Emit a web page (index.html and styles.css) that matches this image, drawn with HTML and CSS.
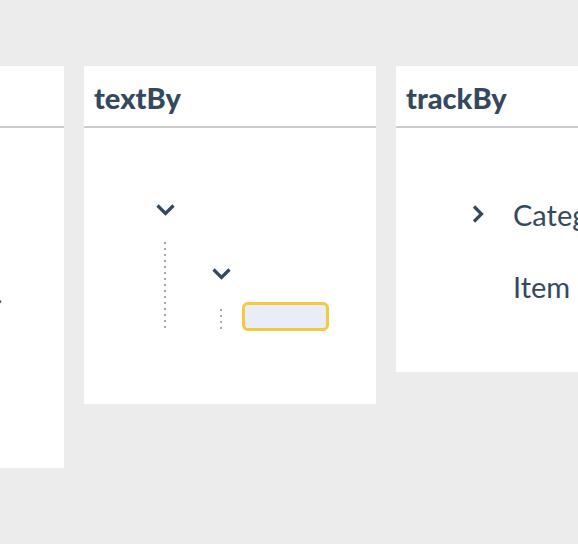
FILE: index.html
```html
<!DOCTYPE html>
<html lang="en">
<head>
<meta charset="utf-8">
<title>Tree demos</title>
<link rel="stylesheet" href="styles.css">
</head>
<body>
<div class="strip">
  <section class="card card-a">
    <header class="card-head"></header>
    <div class="card-body body-a">
      <div class="tree-row">
        <svg class="chev-down" width="19" height="12" viewBox="0 0 19 12"><path d="M1.5 1.5 L9.5 9.5 L17.5 1.5" /></svg>
      </div>
    </div>
  </section>

  <section class="card card-b">
    <header class="card-head"><h2 class="card-title">textBy</h2></header>
    <div class="card-body body-b">
      <div class="tree-row">
        <svg class="chev-down" width="19" height="12" viewBox="0 0 19 12"><path d="M1.5 1.5 L9.5 9.5 L17.5 1.5" /></svg>
      </div>
      <div class="children lvl1">
        <div class="guide guide1"></div>
        <div class="child-content c1">
          <div class="tree-row">
            <svg class="chev-down" width="19" height="12" viewBox="0 0 19 12"><path d="M1.5 1.5 L9.5 9.5 L17.5 1.5" /></svg>
          </div>
          <div class="children lvl2">
            <div class="guide guide2"></div>
            <div class="edit-box"></div>
          </div>
        </div>
      </div>
    </div>
  </section>

  <section class="card card-c">
    <header class="card-head"><h2 class="card-title">trackBy</h2></header>
    <div class="card-body body-c">
      <div class="list-row">
        <svg class="chev-right" width="12" height="18" viewBox="0 0 12 18"><path d="M2 1.5 L9.5 9 L2 16.5" /></svg>
        <span class="label">Category</span>
      </div>
      <div class="list-row">
        <span class="spacer"></span>
        <span class="label">Item</span>
      </div>
    </div>
  </section>
</div>
</body>
</html>
```

FILE: styles.css
```css
html, body {
  margin: 0;
  padding: 0;
  background: #ececec;
  overflow: hidden;
}

body {
  width: 578px;
  height: 544px;
  font-family: "Lato", "Noto Sans", sans-serif;
  color: #34495e;
}

.strip {
  display: flex;
  align-items: flex-start;
  gap: 20px;
  padding-top: 66px;
  margin-left: -228px;
  width: max-content;
}

.card {
  background: #ffffff;
  width: 292px;
  flex: none;
  box-sizing: border-box;
}

.card-head {
  height: 60px;
  border-bottom: 2px solid #cccccc;
  display: flex;
  align-items: center;
  padding-left: 10px;
}

.card-title {
  margin: 0;
  font-size: 29px;
  font-weight: 900;
  line-height: 1;
  letter-spacing: 0;
  padding-top: 2px;
}

.chev-down path,
.chev-right path {
  fill: none;
  stroke: #34495e;
  stroke-width: 3.2;
  stroke-linecap: butt;
  stroke-linejoin: miter;
}

.tree-row {
  height: 24px;
  display: flex;
  align-items: center;
}

/* card A (clipped on the left) */
.card-a {
  height: 402px;
}

.body-a {
  padding: 165px 0 0 211px;
}

/* card B: textBy */
.card-b {
  height: 338px;
}

.body-b {
  padding: 70px 0 0 72px;
}

.children {
  display: flex;
}

.guide {
  width: 2px;
  flex: none;
  background-image: repeating-linear-gradient(to bottom, #aaaaaa 0 2px, transparent 2px 6px);
}

.guide1 {
  margin-left: 8px;
  margin-top: 20px;
  height: 86px;
}

.child-content.c1 {
  padding-top: 40px;
  margin-left: 46px;
}

.guide2 {
  margin-left: 8px;
  margin-top: 23px;
  height: 20px;
}

.edit-box {
  margin-top: 16px;
  margin-left: 20px;
  width: 87px;
  height: 29px;
  box-sizing: border-box;
  border: 3px solid #f5c83f;
  border-radius: 6px;
  background: #e8edf7;
}

/* card C: trackBy */
.card-c {
  height: 306px;
}

.body-c {
  padding: 66px 0 0 76px;
  display: flex;
  flex-direction: column;
  gap: 32px;
}

.list-row {
  height: 40px;
  display: flex;
  align-items: center;
  gap: 29px;
  white-space: nowrap;
}

.spacer {
  width: 12px;
  flex: none;
}

.label {
  font-size: 29px;
  font-weight: 400;
  line-height: 1;
}
```
